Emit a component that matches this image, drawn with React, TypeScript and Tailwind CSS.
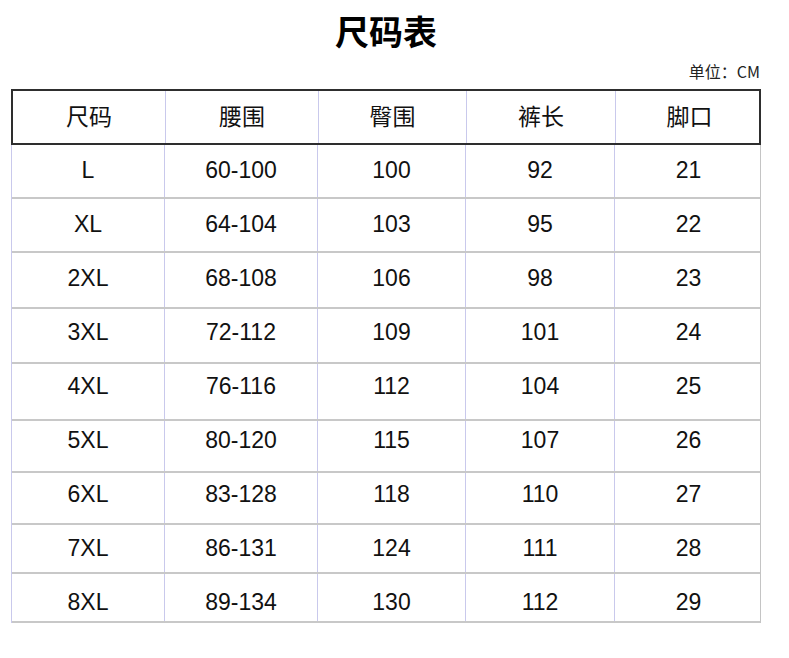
import React from 'react';

const headers = ['尺码', '腰围', '臀围', '裤长', '脚口'];

// row height + small vertical nudge so the text sits where the source image has it
const rows: { h: string; nudge: string; cells: string[] }[] = [
  { h: 'h-[54px]', nudge: 'pb-[2px]', cells: ['L', '60-100', '100', '92', '21'] },
  { h: 'h-[54px]', nudge: 'pb-[2px]', cells: ['XL', '64-104', '103', '95', '22'] },
  { h: 'h-[56px]', nudge: 'pb-[4px]', cells: ['2XL', '68-108', '106', '98', '23'] },
  { h: 'h-[55px]', nudge: 'pb-[7px]', cells: ['3XL', '72-112', '109', '101', '24'] },
  { h: 'h-[57px]', nudge: 'pb-[11px]', cells: ['4XL', '76-116', '112', '104', '25'] },
  { h: 'h-[52px]', nudge: 'pb-[12px]', cells: ['5XL', '80-120', '115', '107', '26'] },
  { h: 'h-[52px]', nudge: 'pb-[8px]', cells: ['6XL', '83-128', '118', '110', '27'] },
  { h: 'h-[49px]', nudge: 'pb-[1px]', cells: ['7XL', '86-131', '124', '111', '28'] },
  { h: 'h-[49px]', nudge: 'pt-[9px]', cells: ['8XL', '89-134', '130', '112', '29'] },
];

const cjk = { fontFamily: '"Noto Sans CJK SC", "Noto Sans", sans-serif' };
const latin = { fontFamily: '"Liberation Sans", Arial, sans-serif' };

export default function App() {
  return (
    <div className="w-[789px] h-[658px] bg-white text-[#111]">
      <div className="ml-[11px] w-[750px] pt-[8px]">
        {/* Title */}
        <div className="h-[46px] flex items-center justify-center text-[34px] font-bold leading-none text-black" style={cjk}>
          尺码表
        </div>
        {/* Unit */}
        <div className="h-[35px] flex items-center justify-end pr-[1px] pb-[2px] text-[16px] text-[#222]" style={cjk}>
          单位：CM
        </div>

        {/* Header */}
        <div className="grid grid-cols-[152px_153px_148px_149px_148px] h-[56px] border-2 border-[#2e2e2e]">
          {headers.map((h, i) => (
            <div
              key={h}
              className={`flex items-center justify-center pb-[3px] text-[23px] ${i > 0 ? 'border-l border-[#c9c9ec]' : ''}`}
              style={cjk}
            >
              {h}
            </div>
          ))}
        </div>

        {/* Body */}
        <div className="border-l border-r border-l-[#c9c9ec] border-r-[#c4c4c4]">
          {rows.map((r) => (
            <div key={r.cells[0]} className={`grid grid-cols-[152px_153px_148px_149px_148px] border-b-2 border-[#c8c8c8] ${r.h}`}>
              {r.cells.map((c, i) => (
                <div
                  key={i}
                  className={`flex items-center justify-center text-[23px] ${r.nudge} ${i > 0 ? 'border-l border-[#c9c9ec]' : ''}`}
                  style={latin}
                >
                  {c}
                </div>
              ))}
            </div>
          ))}
        </div>
      </div>
    </div>
  );
}
